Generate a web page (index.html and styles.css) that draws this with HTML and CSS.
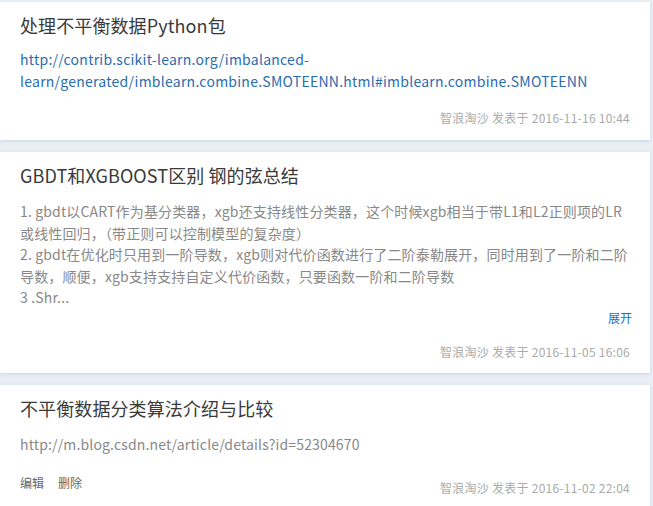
FILE: index.html
```html
<!DOCTYPE html>
<html lang="zh-CN">
<head>
<meta charset="utf-8">
<link rel="stylesheet" href="styles.css">
</head>
<body>
<div class="list">
  <div class="card card-1">
    <h2 class="title">处理不平衡数据Python包</h2>
    <div class="body link">http://contrib.scikit-learn.org/imbalanced-<br>learn/generated/imblearn.combine.SMOTEENN.html#imblearn.combine.SMOTEENN</div>
    <div class="footer"><span></span><span class="meta">智浪淘沙 发表于 2016-11-16 10:44</span></div>
  </div>
  <div class="card card-2">
    <h2 class="title">GBDT和XGBOOST区别 钢的弦总结</h2>
    <div class="body text">1. gbdt以CART作为基分类器，xgb还支持线性分类器，这个时候xgb相当于带L1和L2正则项的LR或线性回归，（带正则可以控制模型的复杂度）<br>2. gbdt在优化时只用到一阶导数，xgb则对代价函数进行了二阶泰勒展开，同时用到了一阶和二阶导数，顺便，xgb支持支持自定义代价函数，只要函数一阶和二阶导数<br>3 .Shr...</div>
    <div class="expand"><span class="expand-link">展开</span></div>
    <div class="footer"><span></span><span class="meta">智浪淘沙 发表于 2016-11-05 16:06</span></div>
  </div>
  <div class="card card-3">
    <h2 class="title">不平衡数据分类算法介绍与比较</h2>
    <div class="body text">http://m.blog.csdn.net/article/details?id=52304670</div>
    <div class="footer"><span class="actions"><span>编辑</span><span>删除</span></span><span class="meta">智浪淘沙 发表于 2016-11-02 22:04</span></div>
  </div>
</div>
</body>
</html>
```
FILE: styles.css
```css
html, body {
  margin: 0;
  padding: 0;
  background: #e9eef5;
}
body {
  font-family: "Noto Sans CJK SC", sans-serif;
  color: #333;
}
.list {
  width: 650px;
  padding-top: 2px;
  display: flex;
  flex-direction: column;
  gap: 12px;
}
.card {
  background: #fff;
  box-shadow: 0 1px 3px rgba(150, 170, 200, 0.35);
  padding: 10px 20px 14px 20px;
}
.title {
  margin: 0;
  font-size: 18px;
  font-weight: normal;
  color: #3a3a3a;
  line-height: 26px;
  letter-spacing: 0.1px;
}
.body {
  font-size: 14px;
  line-height: 22px;
  margin-top: 10px;
}
.link {
  color: #2a6cb0;
  letter-spacing: 0.25px;
}
.text {
  color: #888;
  letter-spacing: 0.15px;
}
.card-2 .body {
  line-height: 21.5px;
  margin-top: 13px;
}
.card-3 .body {
  margin-top: 12px;
}
.expand {
  display: flex;
  justify-content: flex-end;
  font-size: 12px;
  line-height: 16px;
  margin-top: 1px;
  margin-right: -2px;
}
.expand-link {
  color: #1a72c4;
}
.footer {
  display: flex;
  justify-content: space-between;
  align-items: flex-end;
  font-size: 12px;
  line-height: 16px;
  margin-top: 18px;
}
.card-3 .footer {
  margin-top: 20px;
}
.meta {
  color: #aaa;
  letter-spacing: 0.25px;
}
.card-2 {
  padding-bottom: 13px;
}
.actions {
  display: flex;
  gap: 14px;
  color: #666;
  margin-bottom: 5px;
}
```
